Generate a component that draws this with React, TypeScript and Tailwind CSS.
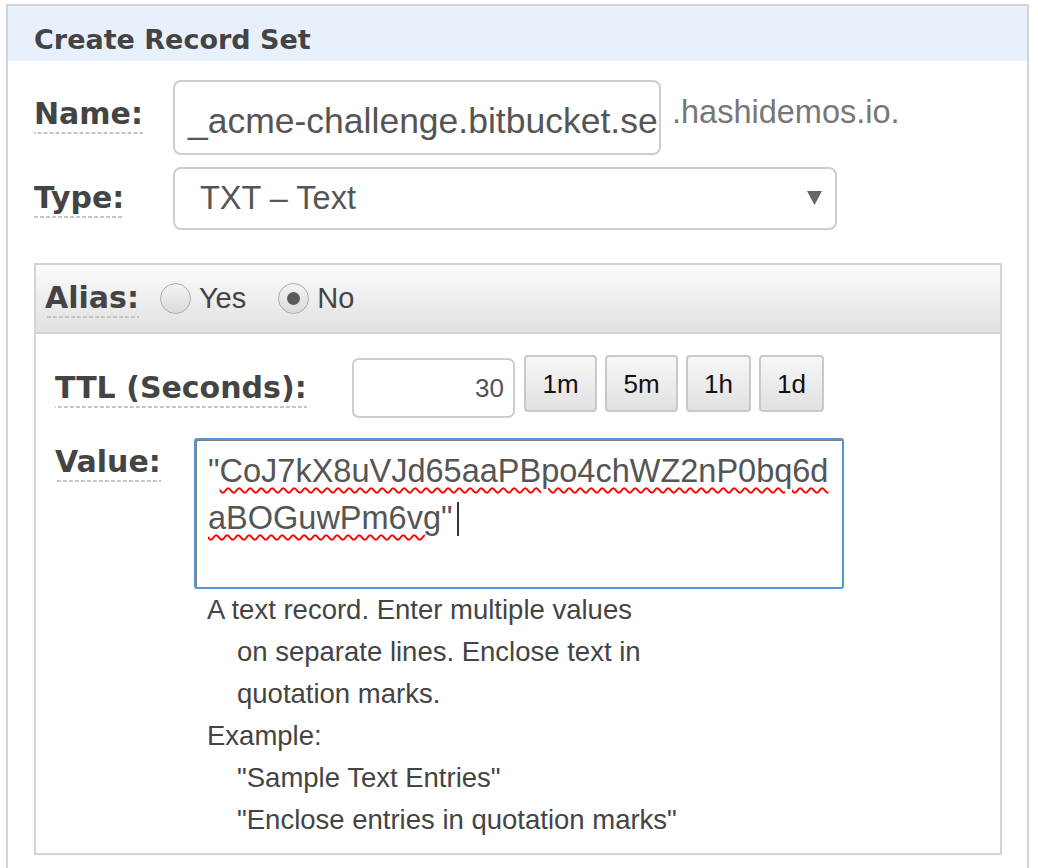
import React from 'react';

const labelCls =
  "inline-block font-['DejaVu_Sans',Verdana,sans-serif] font-bold text-[30px] leading-none text-[#444] pb-[5px] bg-[linear-gradient(to_right,#c4c4c4_66%,transparent_66%)] bg-[length:6px_2px] bg-bottom bg-repeat-x";

const Label: React.FC<{ text: string; className?: string }> = ({ text, className }) => (
  <span className={`${labelCls} ${className ?? ''}`}>{text}</span>
);

const Radio: React.FC<{ checked?: boolean }> = ({ checked }) => (
  <span className="flex h-[31px] w-[31px] items-center justify-center rounded-full border border-[#acacac] bg-[linear-gradient(to_bottom,#f4f4f4,#dadada)]">
    {checked && <span className="h-[13px] w-[13px] rounded-full bg-[#5a5a5a]" />}
  </span>
);

const TtlButton: React.FC<{ text: string; wide?: boolean }> = ({ text, wide }) => (
  <button
    className={`flex h-[57px] items-center justify-center rounded-[4px] border-2 border-[#c9c9c9] bg-[linear-gradient(to_bottom,#f7f7f7,#e1e1e1)] text-[26px] leading-none text-[#111] ${
      wide ? 'w-[73px]' : 'w-[65px]'
    }`}
  >
    {text}
  </button>
);

export default function App() {
  const squiggle = 'underline decoration-wavy decoration-[#ff0000] decoration-[1.5px] underline-offset-[5px]';

  return (
    <div className="min-h-screen bg-white pl-[6px] pt-[4px] font-['Liberation_Sans',Arial,sans-serif]">
      <div className="w-[1023px] border-x-2 border-t-2 border-[#d4d4d4] pb-[20px]">
        {/* title bar */}
        <div className="h-[55px] bg-[#e8f1fb] pl-[26px] pt-[20px] font-['DejaVu_Sans',Verdana,sans-serif] text-[27px] font-bold leading-none text-[#444]">
          Create Record Set
        </div>

        {/* name */}
        <div className="ml-[26px] mt-[19px] flex items-start">
          <div className="w-[139px] pt-[19px]">
            <Label text="Name:" />
          </div>
          <div className="h-[75px] w-[488px] overflow-hidden whitespace-nowrap rounded-[8px] border-2 border-[#cdcdcd] pl-[13px] pr-[4px] pt-[22px] text-[35.5px] leading-none text-[#555]">
            _acme-challenge.bitbucket.se
          </div>
          <div className="ml-[11px] pt-[16px] text-[32.5px] leading-none text-[#777]">.hashidemos.io.</div>
        </div>

        {/* type */}
        <div className="ml-[26px] mt-[12px] flex items-start">
          <div className="w-[139px] pt-[16px]">
            <Label text="Type:" />
          </div>
          <div className="flex h-[63px] w-[664px] items-start justify-between rounded-[8px] border-2 border-[#cdcdcd] pl-[25px] pr-[13px] pt-[13px] text-[32.5px] leading-none text-[#555]">
            <span>TXT – Text</span>
            <svg width="15" height="14" viewBox="0 0 15 14" className="mt-[9px]">
              <polygon points="0,0 15,0 7.5,14" fill="#666" />
            </svg>
          </div>
        </div>

        {/* alias box */}
        <div className="ml-[26px] mt-[33px] w-[968px] border-2 border-[#d4d4d4]">
          <div className="flex h-[69px] items-start border-b-2 border-[#d2d2d2] bg-[linear-gradient(to_bottom,#fbfbfb,#e1e1e1)] pl-[9px] text-[29px] leading-none text-[#444]">
            <div className="mt-[18px]">
              <Label text="Alias:" />
            </div>
            <div className="ml-[21px] mt-[18px]">
              <Radio />
            </div>
            <span className="ml-[8px] mt-[19px]">Yes</span>
            <div className="ml-[32px] mt-[18px]">
              <Radio checked />
            </div>
            <span className="ml-[8px] mt-[19px]">No</span>
          </div>

          <div className="pb-[12px]">
            {/* ttl */}
            <div className="ml-[19px] mt-[21px] flex items-start">
              <div className="w-[297px] pt-[18px]">
                <Label text="TTL (Seconds):" />
              </div>
              <div className="mt-[3px] h-[60px] w-[163px] rounded-[7px] border-2 border-[#cdcdcd] pr-[9px] pt-[15px] text-right text-[26px] leading-none text-[#555]">
                30
              </div>
              <div className="ml-[9px] flex gap-[8px]">
                <TtlButton text="1m" wide />
                <TtlButton text="5m" wide />
                <TtlButton text="1h" />
                <TtlButton text="1d" />
              </div>
            </div>

            {/* value */}
            <div className="ml-[19px] mt-[20px] flex items-start">
              <div className="w-[139px] pt-[9px]">
                <Label text="Value:" />
              </div>
              <div className="h-[151px] w-[650px] rounded-[3px] border-2 border-[#5197e0] pl-[12px] pt-[8px] text-[32.5px] leading-[47px] text-[#555] shadow-[inset_1px_1px_0_#7a7a7a]">
                <div className="whitespace-nowrap">
                  "<span className={squiggle}>CoJ7kX8uVJd65aaPBpo4chWZ2nP0bq6d</span>
                </div>
                <div className="whitespace-nowrap">
                  <span className={squiggle}>aBOGuwPm6vg</span>"
                  <span className="ml-[4px] inline-block h-[34px] w-[2px] bg-[#333] align-[-7px]" />
                </div>
              </div>
            </div>

            {/* help */}
            <div className="ml-[171px] text-[27.5px] leading-[42px] text-[#444]">
              <div>A text record. Enter multiple values</div>
              <div className="pl-[30px]">on separate lines. Enclose text in</div>
              <div className="pl-[30px]">quotation marks.</div>
              <div>Example:</div>
              <div className="pl-[30px]">"Sample Text Entries"</div>
              <div className="pl-[30px]">"Enclose entries in quotation marks"</div>
            </div>
          </div>
        </div>
      </div>
    </div>
  );
}
